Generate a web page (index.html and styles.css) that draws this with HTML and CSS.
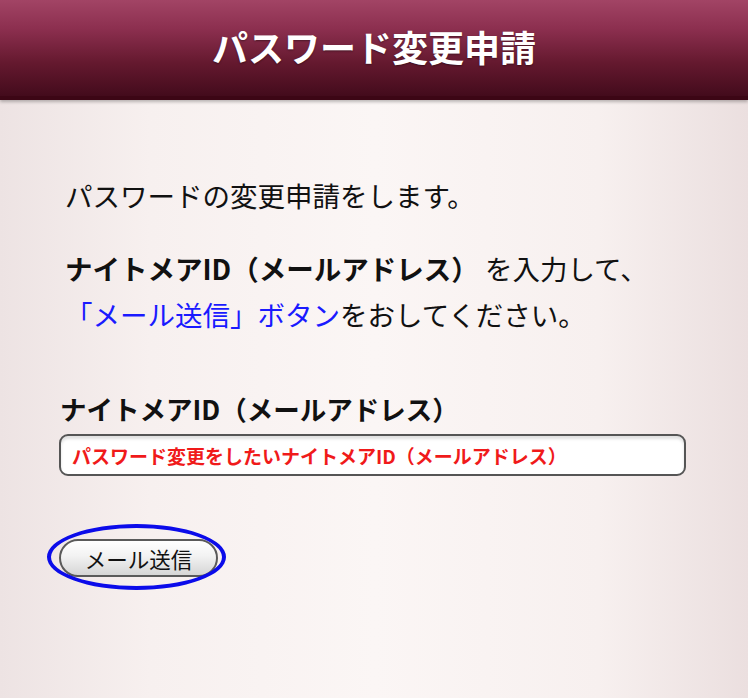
FILE: index.html
```html
<html lang="ja">
<head>
    <meta charset="UTF-8"/>
    <meta name="viewport" content="width=device-width, initial-scale=1.0"/>
    <title>パスワード変更申請</title>
    <link rel="stylesheet" href="styles.css">
</head>
<body>

<div class="page_header">
    <h1>パスワード変更申請</h1>
</div>

<div class="content">
    <p class="intro">パスワードの変更申請をします。</p>
    <p class="guide">
        <b>ナイトメアID（メールアドレス）</b> を入力して、<br>
        <span class="link_text">「メール送信」ボタン</span>をおしてください。
    </p>

    <div class="form_block">
        <label for="mailAddress" class="field_label">ナイトメアID（メールアドレス）</label>
        <input id="mailAddress" type="text" placeholder="パスワード変更をしたいナイトメアID（メールアドレス）">

        <div class="button_row">
            <span class="button_mark">
                <button id="sendMail" type="submit">メール送信</button>
            </span>
        </div>
    </div>
</div>

</body>
</html>
```

FILE: styles.css
```css
body {
    margin: 0;
    font-family: "Noto Sans CJK JP", "Noto Sans", sans-serif;
    color: #111;
    min-height: 698px;
    background: linear-gradient(to right, #ede3e3 0%, #f7f0ef 20%, #fbf6f5 50%, #f7f0ef 80%, #ebdfdf 100%);
}

.page_header {
    height: 96px;
    border-bottom: 4px solid #3c0615;
    background: linear-gradient(to bottom, #a24465 0%, #8c2f4f 30%, #65192f 65%, #430b1c 100%);
    box-shadow: 0 2px 3px rgba(0, 0, 0, 0.25);
    display: flex;
    justify-content: center;
    align-items: center;
}

.page_header h1 {
    margin: 0 0 4px 0;
    color: #fff;
    font-size: 36px;
    font-weight: bold;
    letter-spacing: 0;
    text-shadow: 0 1px 2px rgba(0, 0, 0, 0.4);
}

.content {
    padding: 72px 0 0 65px;
}

.intro, .guide {
    margin: 0;
    font-size: 27.5px;
    line-height: 46px;
}

.guide {
    margin-top: 27px;
}

.guide b {
    font-weight: bold;
}

.link_text {
    color: #1a1aff;
}

.form_block {
    margin: 55px 0 0 -6px;
    display: flex;
    flex-direction: column;
    align-items: flex-start;
}

.field_label {
    font-size: 26.5px;
    font-weight: bold;
    line-height: 34px;
    margin-left: 1px;
    margin-bottom: 8px;
}

input {
    box-sizing: border-box;
    width: 627px;
    height: 42px;
    border: 2px solid #555;
    border-radius: 9px;
    background: #fff;
    box-shadow: inset 0 3px 3px rgba(0, 0, 0, 0.12);
    padding: 0 11px;
    font-family: "Noto Sans CJK JP", sans-serif;
    font-size: 19px;
}

input::placeholder {
    color: #f01a1a;
    font-weight: bold;
    opacity: 1;
}

.button_row {
    margin-top: 63px;
}

.button_mark {
    position: relative;
    display: inline-block;
}

.button_mark::after {
    content: "";
    position: absolute;
    left: -12px;
    top: -15px;
    right: -8px;
    bottom: -13px;
    border: 4px solid #0b0bea;
    border-radius: 50%;
    pointer-events: none;
}

#sendMail {
    box-sizing: border-box;
    width: 159px;
    height: 38px;
    border: 2px solid #5a5a5a;
    border-radius: 19px;
    background: linear-gradient(to bottom, #ffffff 0%, #f2f2f2 45%, #d6d6d6 100%);
    font-family: "Noto Sans CJK JP", sans-serif;
    font-size: 21.5px;
    color: #111;
    padding: 0;
    display: block;
}
```
